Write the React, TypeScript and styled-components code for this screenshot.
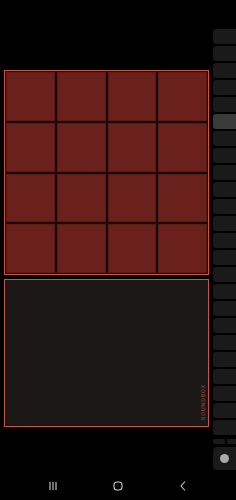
import React from 'react';
import styled, { createGlobalStyle } from 'styled-components';

const Global = createGlobalStyle`
  html, body {
    margin: 0;
    padding: 0;
    background: #000;
    overflow: hidden;
  }
  body {
    font-family: 'Roboto', 'Liberation Sans', sans-serif;
  }
`;

const Screen = styled.div`
  width: 236px;
  height: 500px;
  display: flex;
  flex-direction: column;
  background: #000;
  overflow: hidden;
`;

const Body = styled.div`
  display: flex;
  height: 472px;
`;

const Main = styled.div`
  width: 213px;
  box-sizing: border-box;
  padding: 70px 4px 0 4px;
  display: flex;
  flex-direction: column;
  gap: 4px;
`;

const PadGrid = styled.div`
  width: 205px;
  height: 205px;
  box-sizing: border-box;
  border: 1px solid #c4574a;
  padding: 1px;
  background: #1a0806;
  display: grid;
  grid-template-columns: repeat(4, 1fr);
  grid-template-rows: repeat(4, 1fr);
  gap: 2px;
`;

const Pad = styled.div`
  background: #6a201b;
  border-radius: 1px;
  box-shadow: inset 0 0 0 1px #5c1a16;
`;

const XYPanel = styled.div`
  position: relative;
  width: 205px;
  height: 148px;
  box-sizing: border-box;
  border: 1px solid #c4574a;
  background: #1a1716;
`;

const PanelLabel = styled.span`
  position: absolute;
  right: 2px;
  bottom: 6px;
  writing-mode: vertical-rl;
  transform: rotate(180deg);
  font-size: 5.5px;
  line-height: 6px;
  letter-spacing: 0.9px;
  color: #b24a3f;
  white-space: nowrap;
`;

const KeyStrip = styled.div`
  flex: 1;
  display: flex;
  flex-direction: column;
  padding-top: 29px;
  gap: 2px;
`;

const Key = styled.div<{ $active?: boolean }>`
  width: 26px;
  height: 15px;
  border-radius: 3px;
  background: ${(p) => (p.$active ? '#3b3b3b' : '#1a1a1a')};
`;

const SplitRow = styled.div`
  display: flex;
  gap: 2px;
  margin-top: 2px;
  width: 26px;
`;

const HalfKey = styled.div`
  flex: 1;
  height: 5px;
  border-radius: 1px;
  background: #1a1a1a;
`;

const KnobKey = styled.div`
  margin-top: 1px;
  width: 26px;
  height: 23px;
  border-radius: 4px;
  background: #1a1a1a;
  display: flex;
  align-items: center;
  padding-left: 7px;
  box-sizing: border-box;
`;

const Knob = styled.div`
  width: 9px;
  height: 9px;
  border-radius: 50%;
  background: #a9a9a9;
`;

const NavBar = styled.div`
  height: 28px;
  display: flex;
  align-items: center;
  justify-content: space-between;
  padding: 0 47px 0 47px;
  box-sizing: border-box;
  color: #c9c9c9;
`;

const NavIcon = styled.svg`
  width: 12px;
  height: 12px;
  display: block;
`;

export default function App() {
  const pads = Array.from({ length: 16 });
  const keys = Array.from({ length: 24 });
  return (
    <>
      <Global />
      <Screen>
        <Body>
          <Main>
            <PadGrid>
              {pads.map((_, i) => (
                <Pad key={i} />
              ))}
            </PadGrid>
            <XYPanel>
              <PanelLabel>SOUNDBOX</PanelLabel>
            </XYPanel>
          </Main>
          <KeyStrip>
            {keys.map((_, i) => (
              <Key key={i} $active={i === 5} />
            ))}
            <SplitRow>
              <HalfKey />
              <HalfKey />
            </SplitRow>
            <KnobKey>
              <Knob />
            </KnobKey>
          </KeyStrip>
        </Body>
        <NavBar>
          <NavIcon viewBox="0 0 12 12">
            <path d="M3 2v8M6 2v8M9 2v8" stroke="currentColor" strokeWidth="1.1" fill="none" />
          </NavIcon>
          <NavIcon viewBox="0 0 12 12">
            <rect x="2" y="2" width="8" height="8" rx="3" stroke="currentColor" strokeWidth="1.1" fill="none" />
          </NavIcon>
          <NavIcon viewBox="0 0 12 12">
            <path d="M8 1.5L4 6l4 4.5" stroke="currentColor" strokeWidth="1.1" fill="none" />
          </NavIcon>
        </NavBar>
      </Screen>
    </>
  );
}
